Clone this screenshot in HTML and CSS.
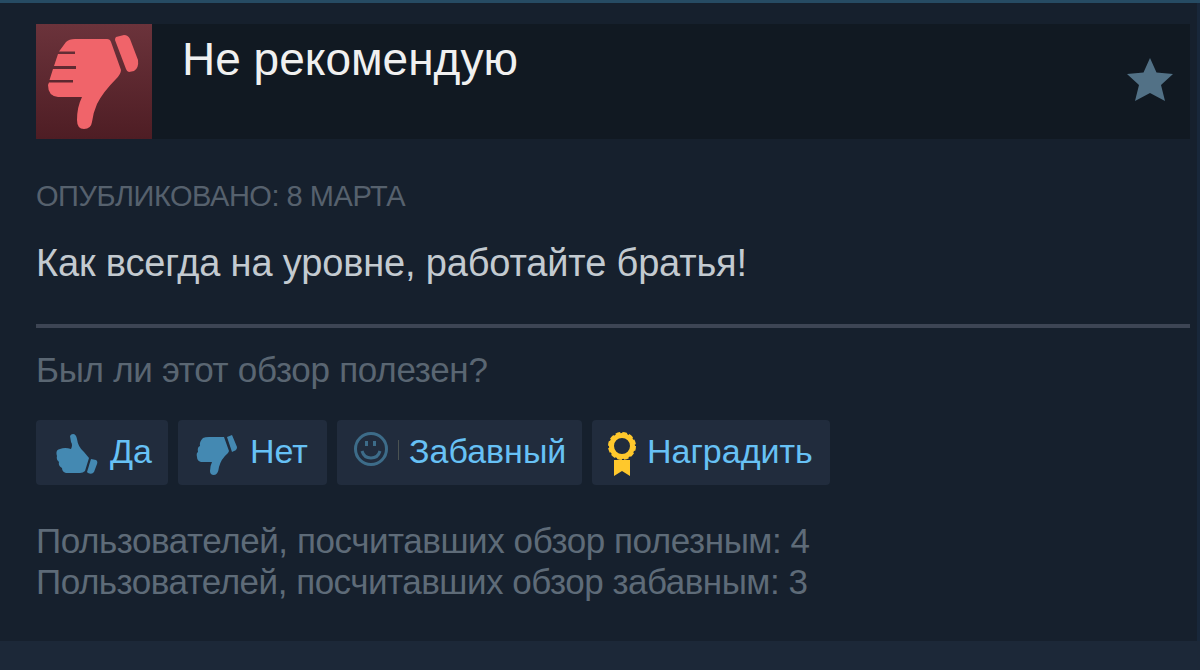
FILE: index.html
```html
<!DOCTYPE html>
<html lang="ru">
<head>
    <meta charset="UTF-8">
    <meta name="viewport" content="width=device-width, initial-scale=1.0">
    <title>Обзор</title>
    <link rel="stylesheet" href="styles.css">
</head>
<body>
    <!-- shared thumb icon -->
    <svg class="defs" width="0" height="0">
        <symbol id="thumb" viewBox="0 -4 94 98">
            <path d="M19 4 Q22 1 28 1 H60 Q63 1 64 4 L74 32 Q74 36 69 41 Q56 54 50 66 Q46 75 45 84 Q44 91 37 91 Q30 91 30 82 Q30 69 35 59 H11 Q1 58 1 47 L2 44.5 H26 V42 H2.5 L6 31 H29 V28 H7 L11 16 H28 V13.5 H12 Z"/>
            <path d="M69 -1 L77 -3 Q81 -3 83 1 L91 22 Q92 30 87 33 L82 34 Q80 34 79 31 L68 2 Q68 0 69 -1 Z"/>
        </symbol>
    </svg>

    <div class="review">
        <div class="header">
            <div class="thumb-box">
                <svg class="thumb-big"><use href="#thumb"/></svg>
            </div>
            <h2 class="title">Не рекомендую</h2>
            <svg class="star" viewBox="0 0 46 44">
                <path d="M23 0 L29.5 14.5 L46 16 L34 27 L38 43 L23 35 L8 43 L12 27 L0 16 L16.5 14.5 Z"/>
            </svg>
        </div>

        <div class="posted">ОПУБЛИКОВАНО: 8 МАРТА</div>
        <div class="text">Как всегда на уровне, работайте братья!</div>
        <div class="line"></div>
        <div class="question">Был ли этот обзор полезен?</div>

        <div class="buttons">
            <div class="btn yes">
                <svg class="icon-up" viewBox="0 0 42 40">
                    <path d="M14 2 Q15 0 17 0 Q20 0 21 5 Q22 13 28 18 L33 24 L29 37 Q27 39 24 39 H10 Q6 38 6 34 Q2 32 3 28 Q0 26 1 22 Q-1 16 4 15 Q9 13 15 15 Q17 11 15 8 Z"/>
                    <path d="M35 25 L40 26 Q42 27 41 30 L38 38 Q36 41 32 39 L31 38 Z"/>
                </svg>
                <span>Да</span>
            </div>
            <div class="btn no">
                <svg class="icon-down" viewBox="0 0 42 42">
                    <path d="M7 3 Q9 2 13 2 H28 L33 16 L32 18 Q25 24 23 32 Q22 40 18 40 Q14 40 14 36 Q14 31 16 27 H5 Q1 26 1 22 Q0 18 2 17 Q1 12 4 11 Q3 7 7 3 Z"/>
                    <path d="M31 2 L36 0 L41 12 Q41 15 38 16 L36 17 Z"/>
                </svg>
                <span>Нет</span>
            </div>
            <div class="btn funny">
                <svg class="icon-smile" viewBox="0 0 36 36">
                    <circle cx="18" cy="18" r="15.5"/>
                    <path d="M9 20 Q11 27 18 27 Q25 27 27 20"/>
                    <path d="M13.5 10 V15 M21.5 10 V15"/>
                </svg>
                <i class="sep"></i>
                <span>Забавный</span>
            </div>
            <div class="btn award">
                <svg class="icon-award" viewBox="0 0 30 46">
                    <circle class="scallop" cx="15" cy="15" r="12.5"/>
                    <circle class="ring" cx="15" cy="15" r="10.5"/>
                    <path d="M7 29 H23 V45 L15 40 L7 45 Z"/>
                </svg>
                <span>Наградить</span>
            </div>
        </div>

        <div class="stats">
            <div class="stat">Пользователей, посчитавших обзор полезным: 4</div>
            <div class="stat second">Пользователей, посчитавших обзор забавным: 3</div>
        </div>
    </div>
</body>
</html>
```

FILE: styles.css
```css
*{
    padding: 0;
    margin: 0;
    box-sizing: border-box;
}
body{
    background-color: #1c2838;
    font-family: "Liberation Sans", Arial, sans-serif;
    height: 670px;
    overflow: hidden;
    white-space: nowrap;
}
.defs{
    display: block;
}
.review{
    height: 641px;
    padding: 21px 10px 0 36px;
    background: #16202d;
    border-top: 3px solid #264b63;
    box-shadow: inset -3px 0 #18273a;
}
.header{
    display: flex;
    height: 115px;
    background: #111922;
}
.thumb-box{
    width: 116px;
    height: 115px;
    padding: 10px 0 0 11px;
    background: linear-gradient(#6b333b, #4e1d24);
}
.thumb-big{
    display: block;
    width: 94px;
    height: 98px;
    fill: #f0646a;
}
.title{
    margin-left: 30px;
    font-size: 46px;
    font-weight: normal;
    line-height: 70px;
    color: #f0f0f0;
}
.star{
    width: 46px;
    height: 44px;
    margin: 34px 17px 0 auto;
    fill: #527186;
}
.posted{
    margin-top: 37px;
    font-size: 29px;
    line-height: 40px;
    letter-spacing: -0.47px;
    color: #56616d;
}
.text{
    margin-top: 22px;
    font-size: 38px;
    line-height: 50px;
    letter-spacing: -0.16px;
    color: #c3cad0;
}
.line{
    height: 4px;
    margin-top: 36px;
    background: #3d4554;
}
.question{
    margin-top: 22px;
    font-size: 35px;
    line-height: 40px;
    letter-spacing: -0.28px;
    color: #5a6672;
}
.buttons{
    display: flex;
    gap: 10px;
    margin-top: 30px;
}
.btn{
    display: flex;
    height: 65px;
    border-radius: 4px;
    background: #212c3d;
    font-size: 34px;
    line-height: 63px;
    color: #67c1f5;
}
.yes{
    width: 132px;
    padding-left: 20px;
}
.no{
    width: 149px;
    padding-left: 18px;
}
.funny{
    width: 245px;
    padding-left: 16px;
}
.award{
    width: 238px;
    padding-left: 15px;
}
.icon-up{
    width: 42px;
    height: 40px;
    margin: 14px 12px 0 0;
    fill: #4489b2;
}
.icon-down{
    width: 42px;
    height: 42px;
    margin: 15px 12px 0 0;
    fill: #4489b2;
}
.icon-smile{
    width: 36px;
    height: 36px;
    margin-top: 11px;
    fill: none;
    stroke: #3d6c89;
    stroke-width: 3;
}
.sep{
    width: 1px;
    height: 20px;
    margin: 20px 10px 0 9px;
    background: #4b5352;
}
.icon-award{
    width: 30px;
    height: 46px;
    margin: 11px 10px 0 0;
    fill: #ffc82c;
}
.ring{
    fill: none;
    stroke: #ffc82c;
    stroke-width: 5;
}
.scallop{
    fill: none;
    stroke: #ffc82c;
    stroke-width: 3;
    stroke-dasharray: 4.5 2.04;
}
.stats{
    margin-top: 35px;
    font-size: 35px;
    line-height: 41px;
    letter-spacing: -0.43px;
    color: #5e6b78;
}
.second{
    letter-spacing: -0.48px;
}
```
